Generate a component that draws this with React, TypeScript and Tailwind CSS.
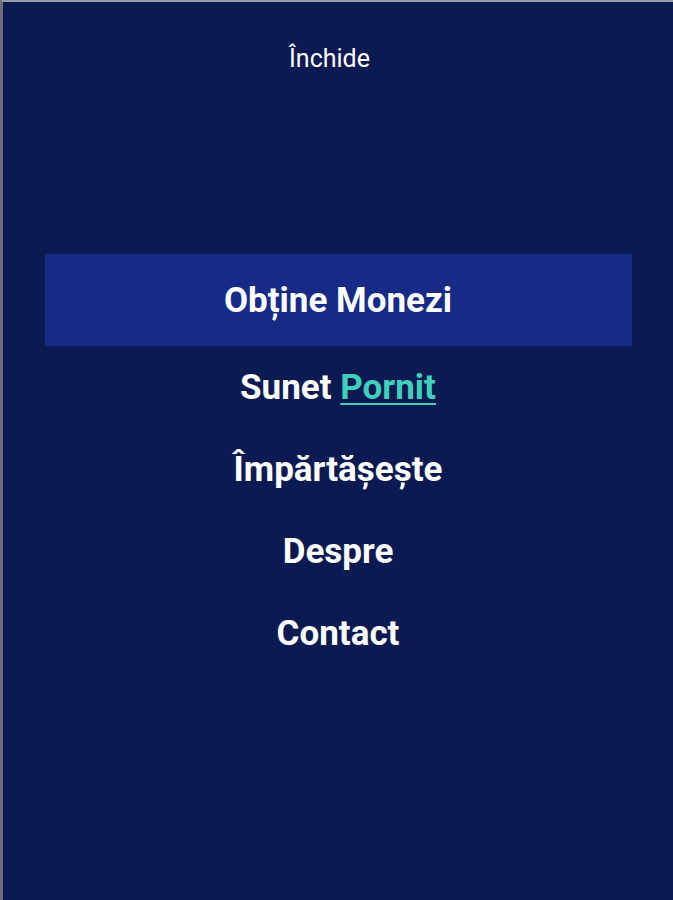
import React from 'react';

const items = ['Împărtășește', 'Despre', 'Contact'];

const App: React.FC = () => {
  return (
    <div
      className="w-full h-screen bg-[#0c1a52] border-t-2 border-l-[3px] border-t-[#9a9aa6] border-l-[#6f6f7c] flex flex-col items-center text-white"
      style={{ fontFamily: 'Roboto, "Noto Sans", sans-serif' }}
    >
      <div className="pt-[41px] mr-[17px] text-[25px] leading-[32px]">Închide</div>

      <div className="mt-[179px] w-full flex flex-col items-center">
        <div className="w-[587px] h-[92px] pt-[3px] bg-[#162a86] flex items-center justify-center text-[35px] font-bold">
          Obține Monezi
        </div>
        <div className="h-[82px] pt-[2px] flex items-center justify-center text-[35px] font-bold">
          Sunet&nbsp;<span className="text-[#3fcfbb] underline decoration-2 underline-offset-[4px]">Pornit</span>
        </div>
        {items.map((t) => (
          <div key={t} className="h-[82px] pt-[2px] flex items-center justify-center text-[35px] font-bold">
            {t}
          </div>
        ))}
      </div>
    </div>
  );
};

export default App;
